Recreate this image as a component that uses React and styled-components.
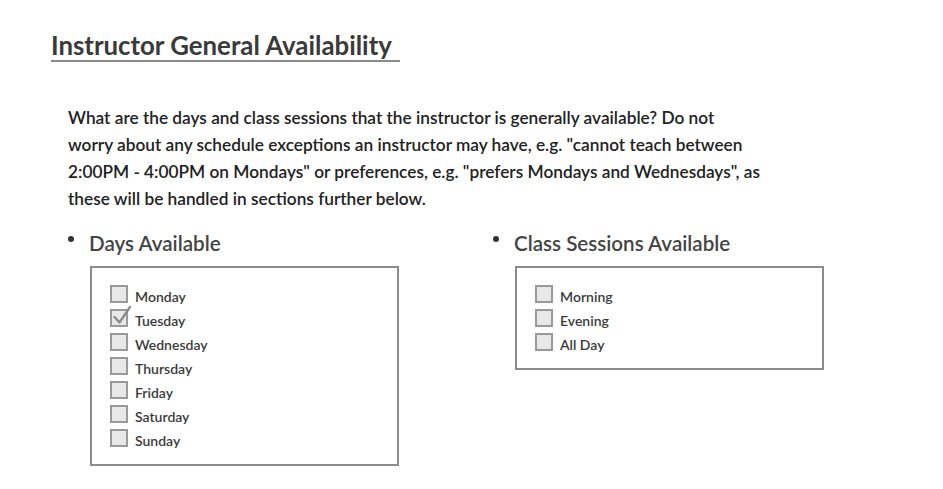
import React from "react";
import styled, { createGlobalStyle } from "styled-components";

const GlobalStyle = createGlobalStyle`
	body {
		margin: 0;
		background: #ffffff;
		font-family: Lato, "Open Sans", sans-serif;
		color: #222;
	}
`;

const days = [
	{ label: "Monday", checked: false },
	{ label: "Tuesday", checked: true },
	{ label: "Wednesday", checked: false },
	{ label: "Thursday", checked: false },
	{ label: "Friday", checked: false },
	{ label: "Saturday", checked: false },
	{ label: "Sunday", checked: false },
];

const sessions = [
	{ label: "Morning", checked: false },
	{ label: "Evening", checked: false },
	{ label: "All Day", checked: false },
];

const CheckList = ({ items }) => (
	<Box>
		{items.map((item) => (
			<Row key={item.label}>
				<Check>
					{item.checked && (
						<svg width="22" height="22" viewBox="0 0 22 22">
							<path
								d="M3.5 12 L8.5 17.5 L19 2"
								fill="none"
								stroke="#8a8a8a"
								strokeWidth="2.3"
								strokeLinecap="round"
								strokeLinejoin="round"
							/>
						</svg>
					)}
				</Check>
				<Label>{item.label}</Label>
			</Row>
		))}
	</Box>
);

const App = () => {
	return (
		<Page>
			<GlobalStyle />
			<Title>Instructor General Availability</Title>
			<Intro>
				What are the days and class sessions that the instructor is generally
				available? Do not
				<br />
				worry about any schedule exceptions an instructor may have, e.g.
				"cannot teach between
				<br />
				2:00PM - 4:00PM on Mondays" or preferences, e.g. "prefers Mondays and
				Wednesdays", as
				<br />
				these will be handled in sections further below.
			</Intro>
			<Columns>
				<Column>
					<Heading>Days Available</Heading>
					<CheckList items={days} />
				</Column>
				<Column>
					<Heading>Class Sessions Available</Heading>
					<CheckList items={sessions} />
				</Column>
			</Columns>
		</Page>
	);
};

const Page = styled.div`
	padding: 30px 0 20px 51px;
`;

const Title = styled.h1`
	display: inline-block;
	margin: 0;
	padding-right: 8px;
	font-size: 25.8px;
	font-weight: 700;
	line-height: 30px;
	color: #3a3a3a;
	border-bottom: 2px solid #8a8a8a;
`;

const Intro = styled.p`
	margin: 42px 0 0 17px;
	font-size: 17.25px;
	line-height: 27px;
	font-weight: 600;
	color: #222;
`;

const Columns = styled.div`
	display: grid;
	grid-template-columns: 425px 330px;
	margin: 19px 0 0 17px;
`;

const Column = styled.div`
	display: flex;
	flex-direction: column;
`;

const Heading = styled.h2`
	display: flex;
	align-items: center;
	margin: 0;
	font-size: 20.6px;
	font-weight: 600;
	line-height: 24px;
	color: #444;
	&::before {
		content: "";
		width: 6px;
		height: 6px;
		border-radius: 50%;
		background: #333;
		margin: -8px 15px 0 0;
	}
`;

const Box = styled.div`
	display: flex;
	flex-direction: column;
	gap: 6px;
	width: 269px;
	margin: 11px 0 0 22px;
	padding: 17px 18px;
	border: 2px solid #8c8c8c;
`;

const Row = styled.div`
	display: flex;
	align-items: center;
	gap: 7px;
	height: 18px;
`;

const Check = styled.span`
	position: relative;
	flex: none;
	width: 14px;
	height: 14px;
	background: #e8e8e8;
	border: 2px solid #9a9a9a;
	svg {
		position: absolute;
		left: -1px;
		top: -6px;
	}
`;

const Label = styled.span`
	font-size: 14px;
	line-height: 18px;
	font-weight: 600;
	color: #3a3a3a;
	margin-top: 5px;
`;

export default App;
